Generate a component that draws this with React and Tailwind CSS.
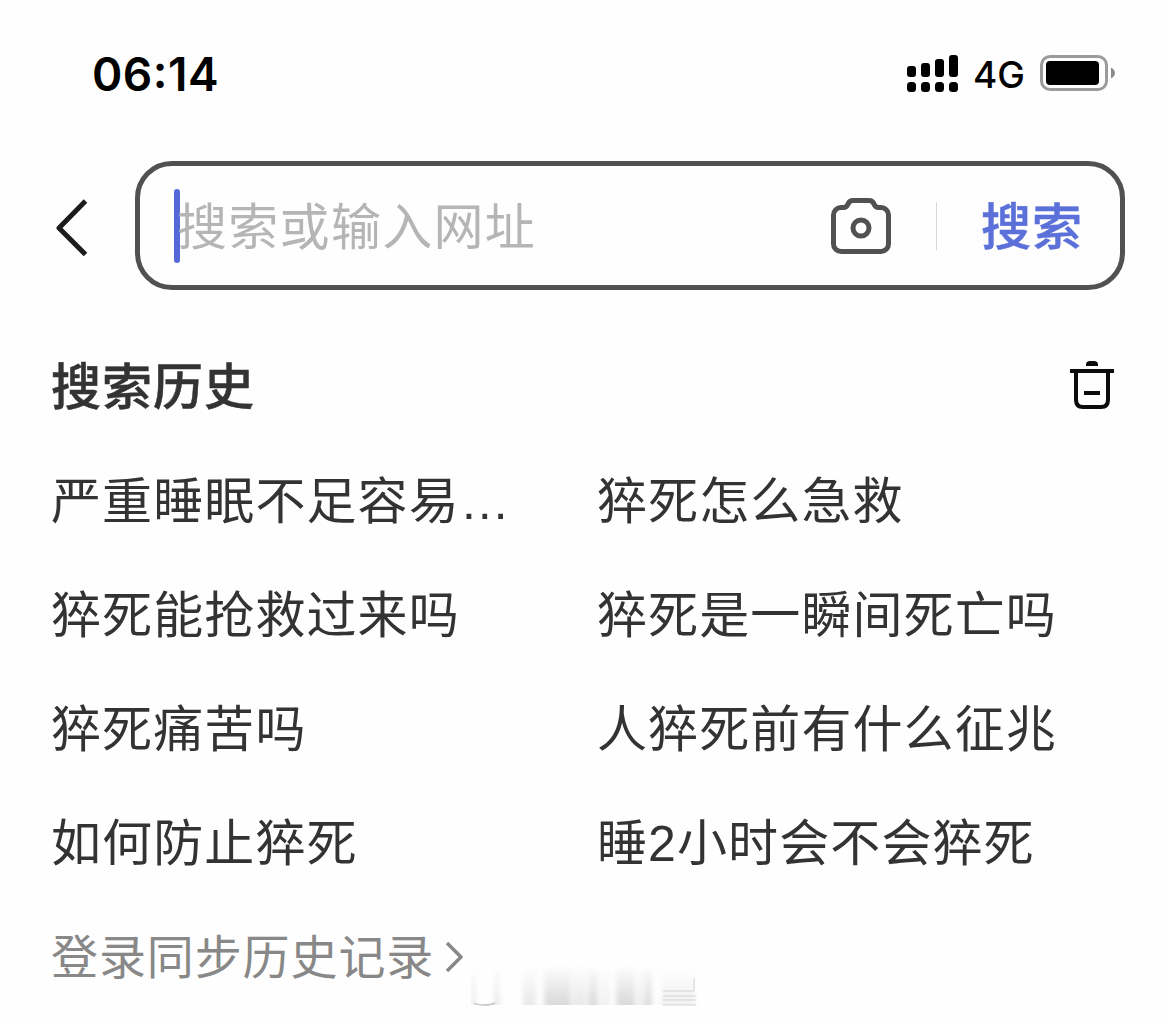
const history = [
  "严重睡眠不足容易…",
  "猝死怎么急救",
  "猝死能抢救过来吗",
  "猝死是一瞬间死亡吗",
  "猝死痛苦吗",
  "人猝死前有什么征兆",
  "如何防止猝死",
  "睡2小时会不会猝死",
];

// x offset and top of each signal bar
const bars = [
  { x: 1, y: 11 },
  { x: 15, y: 8 },
  { x: 29, y: 4 },
  { x: 43, y: 0 },
];

function StatusBar() {
  return (
    <div className="h-[148px] flex items-start justify-between pl-[92px] pr-[53px]">
      <span className="mt-[44px] h-[60px] leading-[60px] text-[46px] font-semibold font-['Inter',sans-serif] text-black tracking-[0.5px]">
        06<span className="relative -top-[3px]">:</span>14
      </span>
      <div className="mt-[54px] flex items-start">
        <svg width="54" height="40" viewBox="0 0 54 40" className="mt-[1px]">
          {bars.map((b) => (
            <g key={b.x}>
              <rect x={b.x} y={b.y} width="9" height={22 - b.y} rx="3" />
              <rect x={b.x} y="27" width="9" height="10" rx="3.5" />
            </g>
          ))}
        </svg>
        <span className="ml-[13px] w-[53px] h-[40px] leading-[42px] text-[37px] font-medium font-['Inter',sans-serif] text-black">
          4G
        </span>
        <svg width="76" height="38" viewBox="0 0 76 38" className="ml-[14px]">
          <rect x="1.5" y="2.5" width="65" height="33" rx="8.5" fill="none" stroke="#9b9b9b" strokeWidth="3" />
          <rect x="6" y="7" width="53" height="24" rx="4" />
          <path d="M71 13.5c2 1 4 3 4 5.500s-2 4.500-4 5.500z" fill="#8b8b8b" />
        </svg>
      </div>
    </div>
  );
}

function SearchBar() {
  return (
    <div className="pt-[13px] pl-[54px] pr-[44px] flex items-center">
      <svg width="36" height="62" viewBox="0 0 36 62" fill="none" stroke="#1c1c1c" strokeWidth="5" strokeLinejoin="round" className="mt-[5px]">
        <path d="M31.500 4L5 31l26.500 26.500" />
      </svg>
      <div className="ml-[45px] flex-1 h-[129px] border-[5px] border-[#515151] rounded-[37px] flex items-center">
        <div className="ml-[34px] w-[6px] h-[74px] rounded-full bg-[#5468d8]" />
        <span className="-ml-[3px] flex-1 pt-[5px] text-[50px] tracking-[1.3px] text-[#b5b5b5] whitespace-nowrap">
          搜索或输入网址
        </span>
        <svg width="60" height="56" viewBox="0 0 60 56" fill="none" stroke="#515151" strokeWidth="5">
          <path d="M10 9.500h2.500c2.500 0 3.500-1 4.500-3.500S19.500 2.500 22 2.500h16c2.500 0 4 1 5 3.500s2 3.500 4.500 3.500H50a7.500 7.500 0 0 1 7.500 7.500v29a7.500 7.500 0 0 1-7.500 7.500H10A7.500 7.500 0 0 1 2.500 46V17A7.500 7.500 0 0 1 10 9.500z" />
          <circle cx="30" cy="30" r="8" />
        </svg>
        <div className="ml-[45px] w-px h-[48px] bg-[#d8d8d8]" />
        <span className="ml-[44px] mr-[37px] pt-[5px] text-[50px] tracking-[1px] font-medium text-[#5b70d8] [-webkit-text-stroke:0.5px_#5b70d8]">
          搜索
        </span>
      </div>
    </div>
  );
}

// Faint residue of a blurred out mark at the bottom edge
function FadedMark() {
  return (
    <svg width="228" height="46" viewBox="0 0 228 46" className="block">
      <defs>
        <linearGradient id="fade" x1="0" y1="0" x2="0" y2="1">
          <stop offset="0" stopColor="#dadada" stopOpacity="0" />
          <stop offset="1" stopColor="#dadada" />
        </linearGradient>
        <filter id="soft" x="-20%" width="140%">
          <feGaussianBlur stdDeviation="2.500 0.400" />
        </filter>
      </defs>
      <g fill="url(#fade)" filter="url(#soft)">
        <rect x="1" y="2" width="3" height="38" opacity="0.8" />
        <rect x="24" y="2" width="4" height="38" opacity="0.8" />
        <rect x="52" y="2" width="13" height="38" opacity="0.6" />
        <rect x="73" y="0" width="27" height="40" />
        <rect x="102" y="0" width="13" height="40" opacity="0.6" />
        <rect x="117" y="0" width="10" height="40" />
        <rect x="130" y="2" width="9" height="38" opacity="0.4" />
        <rect x="145" y="0" width="19" height="40" />
        <rect x="166" y="2" width="12" height="38" opacity="0.5" />
        <rect x="175" y="0" width="6" height="40" />
        <rect x="190" y="2" width="34" height="38" opacity="0.35" />
      </g>
      <path d="M3 38q3 2 10 2t11-2" fill="none" stroke="#c4c4c4" strokeWidth="1.500" />
      <path d="M223 13v13h-31M192 31h33M192 35h33M192 40h33" fill="none" stroke="#cccccc" strokeWidth="1" opacity="0.8" />
    </svg>
  );
}

export default function App() {
  return (
    <div className="w-[1169px] h-[1018px] overflow-hidden bg-[#fefefe] font-['Liberation_Sans','Noto_Sans_CJK_SC',sans-serif] text-[#333333]">
      <StatusBar />
      <SearchBar />

      <div className="mt-[61px] h-[74px] pl-[51px] pr-[54px] flex items-center justify-between">
        <h2 className="text-[50px] leading-[74px] tracking-[1px] font-medium [-webkit-text-stroke:0.5px_#333333]">搜索历史</h2>
        <svg width="46" height="50" viewBox="0 0 46 50" fill="none" stroke="#0c0c0c" strokeWidth="4" className="-mt-[6px]">
          <path d="M17 6V4.500Q17 1 21 1h4q4 0 4 3.500V6z" fill="#0c0c0c" stroke="none" />
          <path d="M1 11h44M7 11v29q0 7 7 7h18q7 0 7-7V11M15 33h16" />
        </svg>
      </div>

      <div className="mt-[20px] pl-[51px] grid grid-cols-[546px_1fr]">
        {history.map((item) => (
          <span key={item} className="h-[114px] leading-[114px] text-[50px] tracking-[1.1px] whitespace-nowrap">
            {item}
          </span>
        ))}
      </div>

      <div className="pl-[51px] h-[114px] flex items-center text-[#888888]">
        <span className="text-[47px] tracking-[0.9px]">登录同步历史记录</span>
        <svg width="20" height="34" viewBox="0 0 20 34" fill="none" stroke="#888888" strokeWidth="3.500" strokeLinejoin="round" className="ml-[11px] -mt-[3px]">
          <path d="M2 3l14 14L2 31" />
        </svg>
      </div>
      <div className="-mt-[50px] pl-[471px]">
        <FadedMark />
      </div>
    </div>
  );
}
